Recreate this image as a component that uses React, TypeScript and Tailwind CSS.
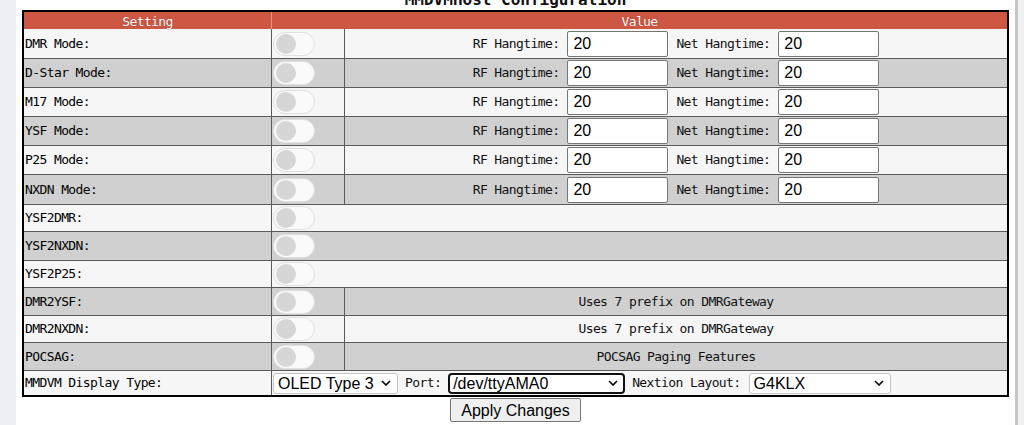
import React from "react";

const MONO = { fontFamily: '"DejaVu Sans Mono", "Liberation Mono", monospace' };
const SANS = { fontFamily: '"Liberation Sans", Arial, sans-serif' };

function Toggle() {
  return (
    <div className="relative w-[42px] h-[24px] rounded-full border border-[#e0e0e0] bg-[#fafafa] ml-[1px]">
      <div className="absolute left-[2px] top-[1px] w-[20px] h-[20px] rounded-full bg-[#d6d6d6]" />
    </div>
  );
}

function NumInput() {
  return (
    <input
      type="text"
      defaultValue="20"
      style={SANS}
      className="w-[101px] h-[26px] border border-[#767676] rounded-[2px] bg-white pl-[5px] text-[16px] text-black outline-none"
    />
  );
}

function Chevron() {
  return (
    <svg width="10" height="6" viewBox="0 0 10 6" className="absolute right-[7px] top-1/2 -translate-y-1/2 pointer-events-none">
      <path d="M1 1 L5 5 L9 1" fill="none" stroke="#000" strokeWidth="1.6" />
    </svg>
  );
}

function Sel({ value, w, focused }: { value: string; w: string; focused?: boolean }) {
  return (
    <div className={`relative ${w} h-[21px]`}>
      <select
        defaultValue={value}
        style={SANS}
        className={
          focused
            ? "appearance-none w-full h-full bg-white border-2 border-[#111] rounded-[4px] pl-[3px] text-[16px] leading-[17px] text-black outline-none"
            : "appearance-none w-full h-full bg-white border border-[#c4c4c4] rounded-[3px] pl-[4px] text-[16px] leading-[19px] text-black outline-none"
        }
      >
        <option>{value}</option>
      </select>
      <Chevron />
    </div>
  );
}

type RowKind = "input" | "toggle" | "text";

const rows: { label: string; kind: RowKind; h: string; text?: string }[] = [
  { label: "DMR Mode:", kind: "input", h: "h-[30px]" },
  { label: "D-Star Mode:", kind: "input", h: "h-[29px]" },
  { label: "M17 Mode:", kind: "input", h: "h-[29px]" },
  { label: "YSF Mode:", kind: "input", h: "h-[29px]" },
  { label: "P25 Mode:", kind: "input", h: "h-[29px]" },
  { label: "NXDN Mode:", kind: "input", h: "h-[30px]" },
  { label: "YSF2DMR:", kind: "toggle", h: "h-[27px]" },
  { label: "YSF2NXDN:", kind: "toggle", h: "h-[29px]" },
  { label: "YSF2P25:", kind: "toggle", h: "h-[27px]" },
  { label: "DMR2YSF:", kind: "text", h: "h-[28px]", text: "Uses 7 prefix on DMRGateway" },
  { label: "DMR2NXDN:", kind: "text", h: "h-[27px]", text: "Uses 7 prefix on DMRGateway" },
  { label: "POCSAG:", kind: "text", h: "h-[28px]", text: "POCSAG Paging Features" },
];

export default function App() {
  return (
    <div className="flex w-[1024px] h-[425px] overflow-hidden bg-white" style={MONO}>
      <div className="w-[16px] shrink-0 bg-[#edf0f4]" />
      <div className="flex-1 flex flex-col bg-white">
        <h2 className="text-center text-[16px] leading-[20px] font-bold text-[#111] -mt-[10px]" style={MONO}>
          MMDVMHost Configuration
        </h2>
        <div className="ml-[6px] w-[987px] border-2 border-black text-[13px] tracking-[-0.6px] text-[#111]">
          <div className="grid grid-cols-[248px_1fr] h-[17px] bg-[#ce5744] text-white">
            <div className="flex items-center justify-center border-r border-[#e49282] [text-shadow:0_0_1px_#7a2a1e]">Setting</div>
            <div className="flex items-center justify-center [text-shadow:0_0_1px_#7a2a1e]">Value</div>
          </div>
          {rows.map((r, i) => (
            <div
              key={r.label}
              className={`grid grid-cols-[248px_73px_1fr] ${r.h} border-b border-[#5a5a5a] ${i % 2 === 0 ? "bg-[#f6f6f6]" : "bg-[#d0d0d0]"}`}
            >
              <div className="flex items-center pl-[1px] border-r border-[#5a5a5a] text-black">{r.label}</div>
              {r.kind === "toggle" ? (
                <div className="col-span-2 flex items-center">
                  <Toggle />
                </div>
              ) : (
                <>
                  <div className="flex items-center border-r border-[#5a5a5a]">
                    <Toggle />
                  </div>
                  {r.kind === "input" ? (
                    <div className="flex items-center justify-center tracking-normal">
                      <span className="tracking-[-0.6px]">RF Hangtime:</span>
                      <span className="ml-[8px]"><NumInput /></span>
                      <span className="ml-[8px] tracking-[-0.6px]">Net Hangtime:</span>
                      <span className="ml-[8px]"><NumInput /></span>
                    </div>
                  ) : (
                    <div className="flex items-center justify-center">{r.text}</div>
                  )}
                </>
              )}
            </div>
          ))}
          <div className="grid grid-cols-[248px_1fr] h-[24px] bg-[#f6f6f6]">
            <div className="flex items-center pl-[1px] border-r border-[#5a5a5a] text-black">MMDVM Display Type:</div>
            <div className="flex items-center pl-[1px] tracking-normal">
              <Sel value="OLED Type 3" w="w-[125px]" />
              <span className="ml-[7px] tracking-[-0.6px]">Port:</span>
              <span className="ml-[7px]"><Sel value="/dev/ttyAMA0" w="w-[177px]" focused /></span>
              <span className="ml-[7px] tracking-[-0.6px]">Nextion Layout:</span>
              <span className="ml-[8px]"><Sel value="G4KLX" w="w-[142px]" /></span>
            </div>
          </div>
        </div>
        <div className="flex justify-center mt-[1px]">
          <button
            style={SANS}
            className="h-[24px] px-[10px] bg-[#efefef] border border-[#767676] rounded-[2px] text-[16px] text-black"
          >
            Apply Changes
          </button>
        </div>
      </div>
      <div className="w-[3px] shrink-0 bg-[#c6c6c6]" />
      <div className="w-[6px] shrink-0 bg-[#f1f1f1]" />
    </div>
  );
}
